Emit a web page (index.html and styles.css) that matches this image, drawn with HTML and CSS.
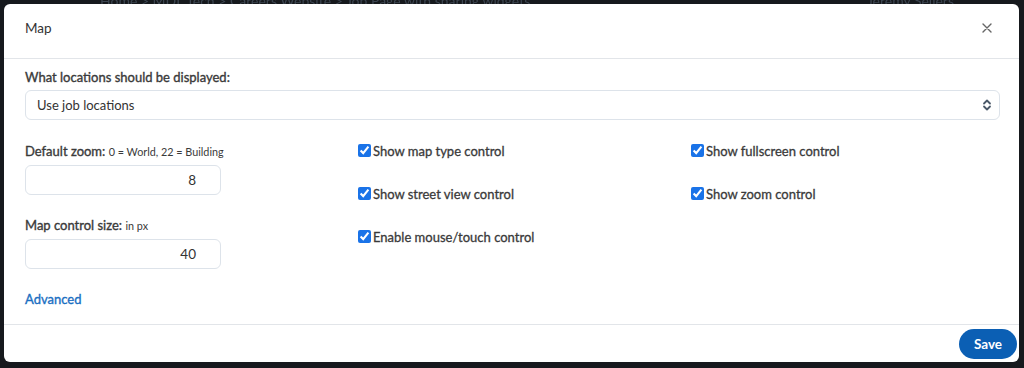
FILE: index.html
```html
<!DOCTYPE html>
<html lang="en">
<head>
    <meta charset="UTF-8">
    <meta name="viewport" content="width=device-width, initial-scale=1.0">
    <title>Map settings</title>
    <link rel="stylesheet" href="styles.css">
</head>
<body>
    <div class="page-bar">
        <span class="crumbs">Home &gt; MDL Tech &gt; Careers Website &gt; Job Page with sharing widgets</span>
        <span class="user">Jeremy Sellers</span>
    </div>

    <div class="modal">
        <header class="modal-header">
            <h2>Map</h2>
            <button class="close" aria-label="Close">
                <svg width="10" height="10" viewBox="0 0 10 10"><path d="M1 1 L9 9 M9 1 L1 9" stroke="#666" stroke-width="1.4" stroke-linecap="round"/></svg>
            </button>
        </header>

        <div class="modal-body">
            <label class="field-label">What locations should be displayed:</label>
            <div class="select">
                <span>Use job locations</span>
                <svg width="10" height="14" viewBox="0 0 10 14"><path d="M2 5.5 L5 2.5 L8 5.5 M2 8.5 L5 11.5 L8 8.5" fill="none" stroke="#4a5868" stroke-width="1.8" stroke-linecap="round" stroke-linejoin="round"/></svg>
            </div>

            <div class="options">
                <div class="col">
                    <label class="field-label">Default zoom: <small>0 = World, 22 = Building</small></label>
                    <div class="num-input">8</div>
                    <label class="field-label">Map control size: <small>in px</small></label>
                    <div class="num-input">40</div>
                    <a class="advanced" href="#">Advanced</a>
                </div>
                <div class="col">
                    <label class="check"><input type="checkbox" checked> Show map type control</label>
                    <label class="check"><input type="checkbox" checked> Show street view control</label>
                    <label class="check"><input type="checkbox" checked> Enable mouse/touch control</label>
                </div>
                <div class="col">
                    <label class="check"><input type="checkbox" checked> Show fullscreen control</label>
                    <label class="check"><input type="checkbox" checked> Show zoom control</label>
                </div>
            </div>
        </div>

        <footer class="modal-footer">
            <button class="save">Save</button>
        </footer>
    </div>
</body>
</html>
```

FILE: styles.css
```css
html,
body {
    margin: 0;
    padding: 0;
}

body {
    font: 13px Lato, 'Liberation Sans', Arial, sans-serif;
    color: #333;
    background: #16191d;
    width: 1024px;
    height: 368px;
    overflow: hidden;
    position: relative;
}

/* page behind the overlay */
.page-bar {
    position: absolute;
    top: -8px;
    left: 0;
    right: 0;
    height: 16px;
    display: flex;
    justify-content: space-between;
    padding: 0 70px 0 100px;
    font-size: 14px;
    color: #3c4550;
    filter: blur(0.6px);
}

.modal {
    position: absolute;
    top: 4px;
    left: 4px;
    width: 1015px;
    height: 358px;
    background: #fff;
    border-radius: 6px;
    display: flex;
    flex-direction: column;
}

.modal-header {
    height: 55px;
    display: flex;
    align-items: center;
    justify-content: space-between;
    padding: 0 27px 6px 21px;
    border-bottom: 1px solid #e2e5e9;
    box-sizing: border-box;
}

.modal-header h2 {
    margin: 0;
    font-size: 13.5px;
    font-weight: 400;
    color: #333;
}

.close {
    border: 0;
    background: none;
    padding: 0;
    width: 10px;
    height: 10px;
    display: flex;
}

.modal-body {
    flex: 1;
    padding: 9px 19px 0 21px;
}

.field-label {
    display: block;
    font-weight: 400;
    -webkit-text-stroke: 0.35px #3a3a3a;
    color: #3a3a3a;
    line-height: 18px;
}

.field-label small {
    font-size: 10.8px;
    -webkit-text-stroke: 0;
}

.select {
    margin-top: 4px;
    height: 30px;
    box-sizing: border-box;
    border: 1px solid #dde3ea;
    border-radius: 6px;
    display: flex;
    align-items: center;
    justify-content: space-between;
    padding: 0 7px 0 11px;
}

.options {
    display: grid;
    grid-template-columns: repeat(3, 309px);
    column-gap: 24px;
    margin-top: 22px;
}

.num-input {
    width: 196px;
    height: 30px;
    box-sizing: border-box;
    border: 1px solid #dde3ea;
    border-radius: 6px;
    margin: 4px 0 21px;
    text-align: right;
    padding-right: 24px;
    line-height: 28px;
    font-size: 13.5px;
}

.advanced {
    display: block;
    margin-top: 1px;
    line-height: 18px;
    color: #1a6fc2;
    -webkit-text-stroke: 0.35px #1a6fc2;
    text-decoration: none;
}

.check {
    display: flex;
    align-items: center;
    gap: 2px;
    line-height: 18px;
    height: 18px;
    margin-bottom: 25px;
    color: #3a3a3a;
    -webkit-text-stroke: 0.3px #3a3a3a;
}

.check input {
    margin: 0 0 1px;
    accent-color: #1a73e8;
}

.modal-footer {
    height: 38px;
    border-top: 1px solid #e2e5e9;
    box-sizing: border-box;
    display: flex;
    align-items: center;
    justify-content: flex-end;
    padding-right: 2px;
}

.save {
    width: 58px;
    height: 30px;
    border: 0;
    border-radius: 15px;
    background: #0b5fb4;
    color: #fff;
    font: inherit;
    font-size: 13.5px;
    font-weight: 700;
}
```
